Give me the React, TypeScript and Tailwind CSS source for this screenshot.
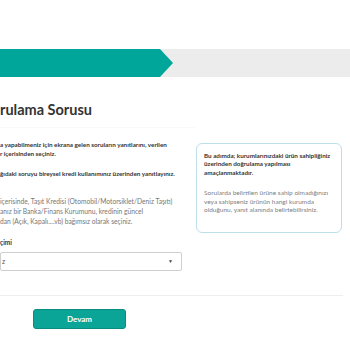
import React from 'react';

export default function App() {
  return (
    <div className="w-[350px] h-[350px] overflow-hidden bg-white font-['Lato',sans-serif] text-[#333]">
      {/* progress */}
      <div className="mt-[49px] flex h-[28px] bg-[#ececec]">
        <div className="w-[160px] bg-[#00a699]" />
        <svg width="14" height="28" viewBox="0 0 14 28" className="block">
          <polygon points="0,0 13,14 0,28" fill="#00a699" />
        </svg>
      </div>

      <h1 className="mt-[23px] text-[14.5px] leading-[20px] font-bold text-[#333]">rulama Sorusu</h1>
      <div className="mt-[7px] w-[195px] border-b border-[#f9f9f9]" />

      <div className="mt-[12px] flex gap-[14px]">
        <div className="w-[182px] shrink-0">
          <div className="text-[6.3px] leading-[9px] font-bold text-[#333] whitespace-nowrap">
            <p>a yapabilmeniz için ekrana gelen soruların yanıtlarını, verilen</p>
            <p>r içerisinden seçiniz.</p>
          </div>
          <p className="mt-[11px] text-[6.3px] leading-[9px] font-bold text-[#333] whitespace-nowrap">
            ğıdaki soruyu bireysel kredi kullanımınız üzerinden yanıtlayınız.
          </p>
          <div className="mt-[18px] text-[6.7px] leading-[10px] text-[#777] whitespace-nowrap">
            <p>içerisinde, Taşıt Kredisi (Otomobil/Motorsiklet/Deniz Taşıtı)</p>
            <p>anız bir Banka/Finans Kurumunu, kredinin güncel</p>
            <p>dan (Açık, Kapalı....vb) bağımsız olarak seçiniz.</p>
          </div>
          <p className="mt-[12px] text-[6.5px] leading-[9px] font-bold text-[#333]">çimi</p>
          <div className="mt-[5px] flex h-[19px] items-center justify-between rounded-[2px] border border-[#cfcfcf] pl-[1px] pr-[8px]">
            <span className="text-[7px] text-[#555]">z</span>
            <span className="text-[5px] text-[#444]">▼</span>
          </div>
        </div>

        <div className="mt-[3px] h-[90px] w-[146px] rounded-[6px] border border-[#bcdfe9] px-[7px] pt-[8px]">
          <div className="text-[6.3px] leading-[8.4px] font-bold text-[#333] whitespace-nowrap">
            <p>Bu adımda; kurumlarınızdaki ürün sahipliğiniz</p>
            <p>üzerinden doğrulama yapılması</p>
            <p>amaçlanmaktadır.</p>
          </div>
          <div className="mt-[12px] text-[6.5px] leading-[8.4px] text-[#808080] whitespace-nowrap">
            <p>Sorularda belirtilen ürüne sahip olmadığınızı</p>
            <p>veya sahipseniz ürünün hangi kurumda</p>
            <p>olduğunu, yanıt alanında belirtebilirsiniz.</p>
          </div>
        </div>
      </div>

      <div className="mt-[24px] w-[343px] border-b border-[#eeeeee]" />

      <div className="mt-[13px] pl-[33px]">
        <button className="flex h-[20px] w-[93px] items-center justify-center rounded-[3px] border border-[#0b8c82] bg-[#0ba597] text-[8px] font-bold text-white">
          Devam
        </button>
      </div>
    </div>
  );
}
